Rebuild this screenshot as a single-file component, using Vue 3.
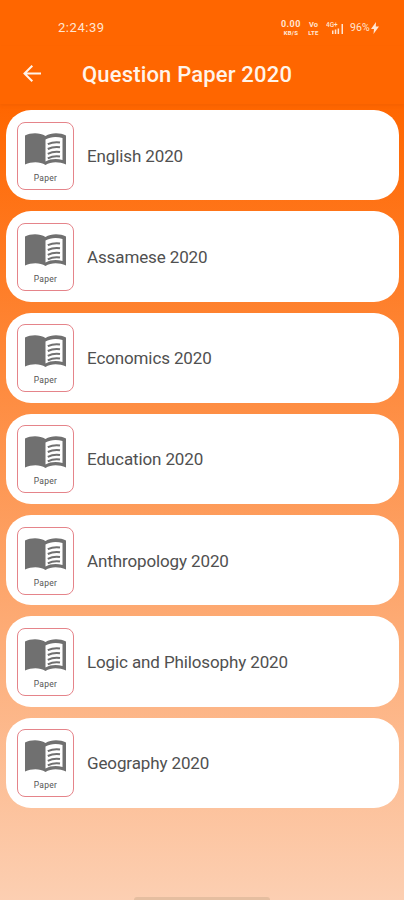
<script setup>
const papers = ['English', 'Assamese', 'Economics', 'Education', 'Anthropology', 'Logic and Philosophy', 'Geography']
</script>

<template>
  <div class="screen">
    <div class="status">
      <span class="clock">2:24:39</span>
      <div class="indicators">
        <div class="stack speed"><b>0.00</b><small>KB/S</small></div>
        <div class="stack volte"><b>Vo</b><small>LTE</small></div>
        <svg class="signal" width="18" height="14" viewBox="0 0 18 14" fill="currentColor">
          <text x="0" y="6" font-size="6.500" font-weight="500">4G+</text>
          <path d="M6 9.500h1.500V13H6zM8.800 8.500h1.500V13H8.800zM11.600 7.500h1.500V13h-1.500zM15.500 3H17v10h-1.500z" />
        </svg>
        <span class="percent">96%</span>
        <svg class="bolt" width="8" height="12" viewBox="0 0 8 12"><path d="M5 0 0 7h3L2.500 12 8 4.500H4.800z" fill="currentColor" /></svg>
      </div>
    </div>
    <header class="bar">
      <svg class="back" width="20" height="20" viewBox="0 0 20 20" fill="none" stroke="currentColor" stroke-width="2">
        <path d="M19 9.500H3M10.300 1.700 2.500 9.500l7.800 7.800" />
      </svg>
      <h1>Question Paper 2020</h1>
    </header>
    <main class="list">
      <article v-for="p in papers" :key="p" class="card">
        <div class="thumb">
          <svg width="41" height="33" viewBox="0 0 41 33">
            <path d="M0 2.500C6-.5 15-.5 20.500 3C26-.5 35-.5 41 2.500V31.500C34 28.500 26 28.500 20.500 32C15 28.500 7 28.500 0 31.500Z" fill="#707070" />
            <path d="M20.500 6.500C25 3.600 32 3.200 37.500 5V27C32 25.300 25 25.700 20.500 28.500Z" fill="#fff" />
            <path d="M22.800 11.200Q28.500 8.400 35 9.400M22.800 16Q28.500 13.200 35 14.200M22.800 20.800Q28.500 18 35 19M22.800 25.300Q28.500 22.500 35 23.500" fill="none" stroke="#707070" stroke-width="2" />
          </svg>
          <span>Paper</span>
        </div>
        <span class="name">{{ p }} 2020</span>
      </article>
    </main>
    <div class="home"></div>
  </div>
</template>

<style>
body { margin: 0; }
</style>

<style scoped>
.screen {
  box-sizing: border-box;
  width: 404px;
  height: 900px;
  overflow: hidden;
  display: flex;
  flex-direction: column;
  font-family: Roboto, sans-serif;
  background: linear-gradient(#ff6600 0, #ff6600 105px, #fccfb2 900px);
}
.status {
  height: 46px;
  flex: none;
  display: flex;
  justify-content: space-between;
  align-items: center;
  box-sizing: border-box;
  padding: 9px 25px 0 58px;
  color: #ffe5d2;
}
.clock { font-size: 13px; letter-spacing: 0.55px; }
.indicators { display: flex; align-items: center; }
.stack { display: flex; flex-direction: column; align-items: center; }
.stack b { font-size: 7.5px; line-height: 9px; font-weight: 700; }
.stack small { font-size: 6px; line-height: 7px; font-weight: 800; letter-spacing: 0.2px; }
.speed { width: 20px; }
.speed b { font-size: 9px; letter-spacing: 0.4px; }
.volte { width: 13px; margin-left: 6px; }
.signal { margin-left: 6px; }
.percent { font-size: 10.5px; margin-left: 6px; letter-spacing: 0.2px; }
.bolt { margin-left: 1px; }
.bar {
  height: 58px;
  flex: none;
  display: flex;
  align-items: center;
  box-sizing: border-box;
  padding: 0 22px 3px;
  color: #fff4ea;
  box-shadow: 0 2px 3px rgba(160, 60, 0, 0.1);
}
.bar h1 {
  margin: 2px 0 0 40px;
  font-size: 22px;
  line-height: 28px;
  font-weight: 500;
  letter-spacing: 0.17px;
  white-space: nowrap;
}
.list {
  display: flex;
  flex-direction: column;
  gap: 11px;
  padding: 6px 5px 0 6px;
}
.card {
  height: 90.25px;
  box-sizing: border-box;
  border-radius: 25px;
  background: #fff;
  display: flex;
  align-items: center;
  padding-left: 11px;
}
.thumb {
  width: 57px;
  height: 68px;
  margin-top: 1px;
  box-sizing: border-box;
  border: 1px solid #e5848a;
  border-radius: 8px;
  display: flex;
  flex-direction: column;
  align-items: center;
  padding-top: 10px;
}
.thumb svg { flex: none; }
.thumb span { margin-top: 7px; font-size: 8.5px; line-height: 11px; color: #555; letter-spacing: 0.3px; }
.name { margin-left: 13px; margin-top: 1px; font-size: 17px; line-height: 22px; letter-spacing: -0.12px; color: #505050; white-space: nowrap; }
.home {
  width: 136px;
  height: 4px;
  margin: auto auto 0;
  border-radius: 3px 3px 0 0;
  background: #e5bea0;
  transform: translateY(1px);
}
</style>
